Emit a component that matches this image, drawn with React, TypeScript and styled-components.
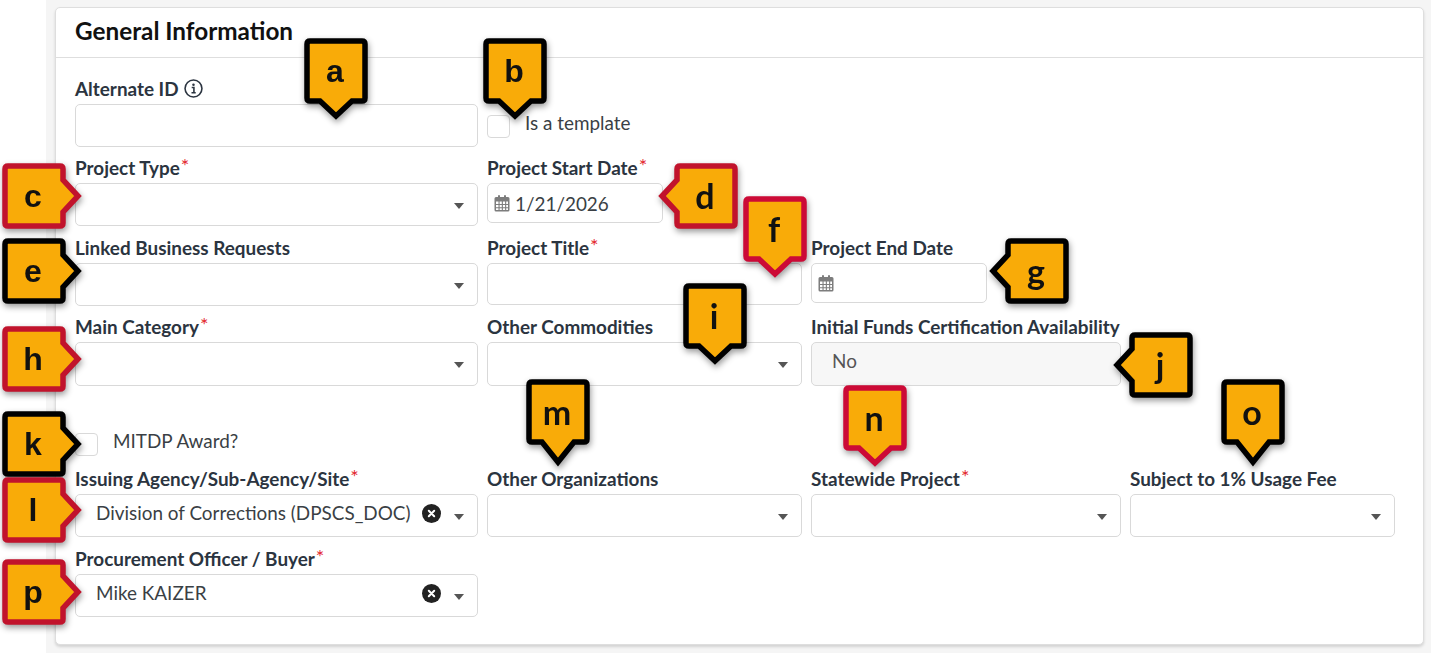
import React from "react";
import styled, { createGlobalStyle } from "styled-components";

const GlobalStyle = createGlobalStyle`
  html, body { margin: 0; padding: 0; background: #fff; }
  body { font-family: Lato, "Liberation Sans", sans-serif; }
`;

const Page = styled.div`
  position: relative;
  width: 1431px;
  height: 653px;
  overflow: hidden;
  background: #fff;
`;

const Backdrop = styled.div`
  margin-left: 46px;
  height: 653px;
  box-sizing: border-box;
  padding: 7px 7px 8px 9px;
  background: #f5f5f5;
`;

const Card = styled.section`
  height: 638px;
  box-sizing: border-box;
  background: #fff;
  border: 1px solid #dedede;
  border-radius: 5px;
  box-shadow: 0 2px 3px rgba(0, 0, 0, 0.14);
`;

const CardHeader = styled.h2`
  margin: 0;
  height: 50px;
  box-sizing: border-box;
  padding: 7px 0 0 19px;
  border-bottom: 1px solid #dedede;
  font-size: 24.3px;
  line-height: 32px;
  font-weight: 700;
  color: #111;
`;

const CardBody = styled.div`
  padding: 19px 0 0 19px;
`;

const Row = styled.div<{ $top?: number }>`
  display: grid;
  grid-template-columns: 403px 315px 310px 265px;
  column-gap: 9px;
  margin-top: ${(p) => p.$top ?? 0}px;
`;

const Field = styled.div`
  display: flex;
  flex-direction: column;
  min-width: 0;
`;

const Label = styled.label`
  display: flex;
  align-items: center;
  height: 24px;
  box-sizing: border-box;
  padding-bottom: 2px;
  margin-bottom: 3px;
  font-size: 18.9px;
  font-weight: 700;
  color: #2b3440;
  white-space: nowrap;
`;

const Required = styled.span`
  margin-left: 1px;
  color: #e3262e;
  font-weight: 400;
  font-size: 20px;
  position: relative;
  top: -2px;
`;

const Control = styled.div<{ $width?: number; $height?: number; $disabled?: boolean }>`
  display: flex;
  align-items: center;
  box-sizing: border-box;
  width: ${(p) => (p.$width ? `${p.$width}px` : "100%")};
  height: ${(p) => p.$height ?? 43}px;
  border: 1px solid #d9d9d9;
  border-radius: 5px;
  background: ${(p) => (p.$disabled ? "#f7f7f7" : "#fff")};
`;

const Value = styled.span<{ $muted?: boolean }>`
  flex: 1;
  padding: 0 0 7px 20px;
  font-size: 18.9px;
  color: ${(p) => (p.$muted ? "#555" : "#3a3f45")};
  white-space: nowrap;
`;

const DateValue = styled.span`
  margin-left: 5px;
  font-size: 18.9px;
  color: #3a3f45;
`;

const CalendarWrap = styled.span`
  display: flex;
  margin-left: 6px;
`;

const ClearWrap = styled.span`
  display: flex;
  margin: 0 13px 4px 0;
`;

const Caret = styled.span`
  width: 0;
  height: 0;
  margin: 2px 13px 0 0;
  border-left: 5.5px solid transparent;
  border-right: 5.5px solid transparent;
  border-top: 6px solid #555;
`;

const CheckRow = styled.div<{ $top: number; $gap: number }>`
  display: flex;
  align-items: flex-start;
  gap: ${(p) => p.$gap}px;
  margin-top: ${(p) => p.$top}px;
`;

const Checkbox = styled.span`
  display: block;
  width: 23px;
  height: 23px;
  box-sizing: border-box;
  border: 1px solid #d9d9d9;
  border-radius: 4px;
  background: #fff;
`;

const CheckText = styled.span`
  margin-top: -1px;
  font-size: 18.9px;
  line-height: 18px;
  color: #3a3f45;
`;

const InfoWrap = styled.span`
  display: flex;
  margin-left: 5px;
`;

const CalloutBox = styled.div<{ $x: number; $y: number }>`
  position: absolute;
  left: ${(p) => p.$x}px;
  top: ${(p) => p.$y}px;
  width: 64px;
  height: 66px;
  display: flex;
  align-items: center;
  justify-content: center;
  filter: drop-shadow(1px 3px 3px rgba(0, 0, 0, 0.4));
`;

const CalloutShape = styled.svg`
  position: absolute;
  left: 0;
  top: 0;
  overflow: visible;
`;

const CalloutLetter = styled.span<{ $lato?: boolean }>`
  position: relative;
  left: -1px;
  font-family: ${(p) => (p.$lato ? "Lato" : '"Liberation Sans"')}, sans-serif;
  font-size: ${(p) => (p.$lato ? 34 : 32)}px;
  font-weight: 700;
  line-height: 1;
  color: #111;
`;

type Dir = "down" | "left" | "right";

// outline of a callout in box coordinates, the tip sticks out of the 64x66 box
function calloutPath(dir: Dir, tip: number) {
  const l = 3, t = 3, r = 61, b = 63, c = 3, half = 16;
  if (dir === "down") {
    const cx = 32;
    return (
      `M${l + c} ${t} H${r - c} Q${r} ${t} ${r} ${t + c} V${b - c} Q${r} ${b} ${r - c} ${b} H${cx + half} L${cx} ${b + tip - 4} L${cx - half} ${b} ` +
      `H${l + c} Q${l} ${b} ${l} ${b - c} V${t + c} Q${l} ${t} ${l + c} ${t} Z`
    );
  }
  const cy = 33;
  if (dir === "right") {
    return (
      `M${l + c} ${t} H${r - c} Q${r} ${t} ${r} ${t + c} V${cy - half} L${r + tip - 4} ${cy} L${r} ${cy + half} V${b - c} ` +
      `Q${r} ${b} ${r - c} ${b} H${l + c} Q${l} ${b} ${l} ${b - c} V${t + c} Q${l} ${t} ${l + c} ${t} Z`
    );
  }
  return (
    `M${l + c} ${t} H${r - c} Q${r} ${t} ${r} ${t + c} V${b - c} Q${r} ${b} ${r - c} ${b} H${l + c} Q${l} ${b} ${l} ${b - c} ` +
    `V${cy + half} L${l - tip + 4} ${cy} L${l} ${cy - half} V${t + c} Q${l} ${t} ${l + c} ${t} Z`
  );
}

const BLACK = "#000";
const RED = "#c1132c";
const CRIMSON = "#cc0a36";

const callouts: { id: string; x: number; y: number; dir: Dir; color: string; tip?: number; lato?: boolean }[] = [
  { id: "a", x: 304, y: 38, dir: "down", color: BLACK },
  { id: "b", x: 483, y: 38, dir: "down", color: BLACK },
  { id: "c", x: 2, y: 163, dir: "right", color: RED },
  { id: "d", x: 674, y: 163, dir: "left", color: RED, lato: true },
  { id: "e", x: 2, y: 238, dir: "right", color: BLACK },
  { id: "f", x: 743, y: 196, dir: "down", color: CRIMSON, lato: true },
  { id: "g", x: 1005, y: 238, dir: "left", color: BLACK, lato: true },
  { id: "h", x: 2, y: 326, dir: "right", color: RED },
  { id: "i", x: 683, y: 283, dir: "down", color: BLACK, lato: true },
  { id: "j", x: 1129, y: 332, dir: "left", color: BLACK, lato: true },
  { id: "k", x: 2, y: 411, dir: "right", color: BLACK },
  { id: "l", x: 2, y: 477, dir: "right", color: RED },
  { id: "m", x: 526, y: 379, dir: "down", color: BLACK, tip: 21, lato: true },
  { id: "n", x: 843, y: 385, dir: "down", color: CRIMSON, lato: true },
  { id: "o", x: 1221, y: 379, dir: "down", color: BLACK, tip: 21, lato: true },
  { id: "p", x: 2, y: 559, dir: "right", color: RED },
];

function Callout({ id, x, y, dir, color, tip = 16, lato }: (typeof callouts)[number]) {
  return (
    <CalloutBox $x={x} $y={y}>
      <CalloutShape width="64" height="66" viewBox="0 0 64 66">
        <path d={calloutPath(dir, tip + 3)} fill="#f9ab08" stroke={color} strokeWidth="5.5" strokeLinejoin="miter" strokeMiterlimit="10" />
      </CalloutShape>
      <CalloutLetter $lato={lato}>{id}</CalloutLetter>
    </CalloutBox>
  );
}

const Calendar = () => (
  <svg width="16" height="17" viewBox="0 0 16 17">
    <path
      fill="#7d7d7d"
      fillRule="evenodd"
      d="M4 1a1 1 0 0 1 2 0v1h4V1a1 1 0 0 1 2 0v1h2a1.5 1.5 0 0 1 1.5 1.5V15a1.5 1.5 0 0 1-1.5 1.5H2A1.5 1.5 0 0 1 .5 15V3.5A1.5 1.5 0 0 1 2 2h2V1ZM2 6.5V9h2.5V6.5H2Zm3.6 0V9h2.2V6.5H5.6Zm3.3 0V9h2.2V6.5H8.9Zm3.3 0V9H14V6.5h-1.8ZM2 10v2.2h2.5V10H2Zm3.6 0v2.2h2.2V10H5.6Zm3.3 0v2.2h2.2V10H8.9Zm3.3 0v2.2H14V10h-1.8ZM2 13.2V15h2.5v-1.8H2Zm3.6 0V15h2.2v-1.8H5.6Zm3.3 0V15h2.2v-1.8H8.9Zm3.3 0V15H14v-1.8h-1.8Z"
    />
  </svg>
);

const ClearIcon = () => (
  <svg width="19" height="19" viewBox="0 0 19 19">
    <circle cx="9.5" cy="9.5" r="9.5" fill="#222" />
    <path d="M6.8 6.8l5.4 5.4M12.2 6.8l-5.4 5.4" stroke="#fff" strokeWidth="2" strokeLinecap="round" />
  </svg>
);

const InfoIcon = () => (
  <svg width="19" height="19" viewBox="0 0 18 18" fill="none">
    <circle cx="9" cy="9" r="8" stroke="#2b3440" strokeWidth="1.5" />
    <circle cx="9" cy="5.4" r="1.2" fill="#2b3440" />
    <path d="M7.3 8h2.1v4.8M7.1 13h4" stroke="#2b3440" strokeWidth="1.5" />
  </svg>
);

const Select = ({ value }: { value?: string }) => (
  <Control>
    <Value>{value}</Value>
    {value && (
      <ClearWrap>
        <ClearIcon />
      </ClearWrap>
    )}
    <Caret />
  </Control>
);

const LabelText = ({ children, required }: { children: React.ReactNode; required?: boolean }) => (
  <Label>
    {children}
    {required && <Required>*</Required>}
  </Label>
);

export default function App() {
  return (
    <Page>
      <GlobalStyle />
      <Backdrop>
        <Card>
          <CardHeader>General Information</CardHeader>
          <CardBody>
            <Row>
              <Field>
                <Label>
                  Alternate ID
                  <InfoWrap>
                    <InfoIcon />
                  </InfoWrap>
                </Label>
                <Control />
              </Field>
              <CheckRow $top={38} $gap={15}>
                <Checkbox />
                <CheckText>Is a template</CheckText>
              </CheckRow>
            </Row>
            <Row $top={9}>
              <Field>
                <LabelText required>Project Type</LabelText>
                <Select />
              </Field>
              <Field>
                <LabelText required>Project Start Date</LabelText>
                <Control $width={176} $height={40}>
                  <CalendarWrap>
                    <Calendar />
                  </CalendarWrap>
                  <DateValue>1/21/2026</DateValue>
                </Control>
              </Field>
            </Row>
            <Row $top={10}>
              <Field>
                <LabelText>Linked Business Requests</LabelText>
                <Select />
              </Field>
              <Field>
                <LabelText required>Project Title</LabelText>
                <Control $height={42} />
              </Field>
              <Field>
                <LabelText>Project End Date</LabelText>
                <Control $width={176} $height={40}>
                  <CalendarWrap>
                    <Calendar />
                  </CalendarWrap>
                </Control>
              </Field>
            </Row>
            <Row $top={9}>
              <Field>
                <LabelText required>Main Category</LabelText>
                <Control $height={44}>
                  <Value />
                  <Caret />
                </Control>
              </Field>
              <Field>
                <LabelText>Other Commodities</LabelText>
                <Control $height={44}>
                  <Value />
                  <Caret />
                </Control>
              </Field>
              <Field>
                <LabelText>Initial Funds Certification Availability</LabelText>
                <Control $height={44} $disabled>
                  <Value $muted>No</Value>
                </Control>
              </Field>
            </Row>
            <CheckRow $top={47} $gap={15}>
              <Checkbox />
              <CheckText>MITDP Award?</CheckText>
            </CheckRow>
            <Row $top={11}>
              <Field>
                <LabelText required>Issuing Agency/Sub-Agency/Site</LabelText>
                <Select value="Division of Corrections (DPSCS_DOC)" />
              </Field>
              <Field>
                <LabelText>Other Organizations</LabelText>
                <Select />
              </Field>
              <Field>
                <LabelText required>Statewide Project</LabelText>
                <Select />
              </Field>
              <Field>
                <LabelText>Subject to 1% Usage Fee</LabelText>
                <Select />
              </Field>
            </Row>
            <Row $top={10}>
              <Field>
                <LabelText required>Procurement Officer / Buyer</LabelText>
                <Select value="Mike KAIZER" />
              </Field>
            </Row>
          </CardBody>
        </Card>
      </Backdrop>
      {callouts.map((c) => (
        <Callout key={c.id} {...c} />
      ))}
    </Page>
  );
}
